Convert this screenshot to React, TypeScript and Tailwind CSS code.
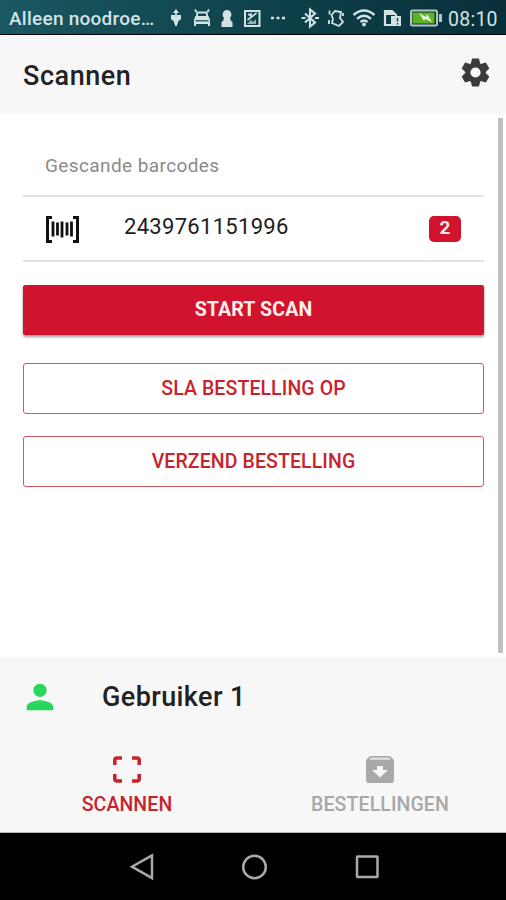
import type { ReactNode } from "react";

function StatusBar() {
  return (
    <header className="flex h-[35px] shrink-0 items-center border-b border-black bg-linear-to-r from-[#1a5860] via-[#0f434c] to-[#082f3a] text-[#d3e2e5]">
      <span className="ml-[9px] w-[150px] whitespace-nowrap pt-[4px] text-[19px] font-medium leading-[36px] tracking-[0.25px]">Alleen noodroe…</span>
      <svg className="h-[34px] w-[284px] shrink-0" viewBox="159 0 284 34" fill="none" stroke="currentColor" strokeWidth="2">
        <path d="M176 11v15" strokeWidth="1.800" />
        <path d="M176 9l-3 4h6zM171 15h4v2h2v-2h4v4l-3 2.500V23l-2 3-2-3v-1.500L171 19z" fill="currentColor" stroke="none" />
        <path d="M197 16.500v-2.500q0-1.500 1.500-1.500h7q1.500 0 1.500 1.500v2.500M196.500 12l-1.500-2.500M207.500 12l1.500-2.500" strokeWidth="1.900" />
        <path d="M195.500 16h13l1.500 3.500V26h-2v-2h-12v2h-2v-6.500z" fill="currentColor" stroke="none" />
        <path d="M195.500 20.800h13" stroke="#104750" strokeWidth="1.200" />
        <path d="M227 10a4.500 4.500 0 0 1 3 7.800L231 21l1.500 1v5h-11v-5l1.500-1 1-3.200A4.500 4.500 0 0 1 227 10z" fill="currentColor" stroke="none" />
        <path d="M245 11h14.500v15H245z" />
        <path d="M247.500 20l9-7M248 14l3 2v-3" strokeWidth="1.600" />
        <path d="M247 24l4-4 2 2 3-3v5z" fill="currentColor" stroke="none" opacity="0.700" />
        <path d="M271 18h3M276.500 18h3M282 18h3" strokeWidth="2.500" />
        <path d="M305 13.500l10 9-5 4V9.500l5 4-10 9M301.500 18h4M315 18h4" strokeWidth="2.100" />
        <path d="M331.500 15l3.500-4 6 1-1 6 3 4-4 4-7-3 1-4zM329.500 10.500v4M343 13v3M329 20v4" strokeWidth="1.800" />
        <path d="M353.500 15q10.500-9 21 0M357 18.800q7-6 14 0M360.500 22q3.500-3 7 0" strokeWidth="2.400" />
        <circle cx="364" cy="24.500" r="1.900" fill="currentColor" stroke="none" />
        <path d="M391 25h-6V11h7l4 4v1" strokeWidth="2.200" />
        <path d="M385 11h7l4 4h-11z" fill="currentColor" stroke="none" />
        <path d="M391 16h10v10h-10z" fill="currentColor" stroke="none" />
        <path d="M397.500 18v3.500M397.500 23v1.500" stroke="#0b3540" strokeWidth="1.400" />
        <rect x="411" y="10.500" width="26" height="15" rx="1.500" fill="#0b3540" stroke="#b7c4c5" />
        <path d="M412.500 12.500h22v11h-22z" fill="#5eb321" stroke="none" />
        <path d="M419 13l7 4 1-3 5 8-7-3-1 2z" fill="#e9f4df" stroke="none" />
        <path d="M440.500 14v8" stroke="#b7c4c5" strokeWidth="3" />
      </svg>
      <span className="ml-[5px] whitespace-nowrap pt-[5px] text-[19.5px] leading-[37px] tracking-[0.25px]">08:10</span>
    </header>
  );
}

function OutlineButton({ children }: { children: ReactNode }) {
  return (
    <button className="flex h-[51px] w-full items-center justify-center rounded-[3px] border border-[#d4565f] pt-px text-[19.5px] font-medium tracking-[0.1px] text-[#c9222b]">
      {children}
    </button>
  );
}

function Content() {
  return (
    <main className="flex h-[543px] shrink-0 bg-white pr-[3px]">
      <div className="flex-1 pl-[23px] pr-[14px] pt-[22px]">
        <h2 className="flex h-[61px] items-center border-b-2 border-[#e2e2e2] pl-[22px] pt-[2px] text-[19px] text-[#8a8a8a]">
          <span className="tracking-[0.4px]">Gescande barcodes</span>
        </h2>
        <div className="flex h-[65px] items-center border-b-2 border-[#e2e2e2] pl-[23px] pr-[23px]">
          <svg className="mt-[2px] h-[27px] w-[33px]" viewBox="0 0 33 27" fill="none" stroke="#111">
            <path d="M6 1.500H1.500v24H6M27 1.500h4.500v24H27" strokeWidth="3" />
            <path d="M7 5.500v15M11.500 6.500v13M16 5.500v16M21 6.500v13M25.500 5.500v15" strokeWidth="2.800" />
          </svg>
          <span className="ml-[45px] flex-1 pb-[3px] text-[22px] leading-[28px] tracking-[0.3px] text-[#1d1d1d]">2439761151996</span>
          <span className="flex h-[26px] w-[32px] items-center justify-center rounded-[5px] bg-[#d1132e] pb-px text-[19px] font-bold text-[#fbe8e9]">2</span>
        </div>
        <div className="flex flex-col pt-[23px]">
          <button className="mb-[28px] flex h-[50px] w-full items-center justify-center rounded-[2px] bg-[#d1132e] text-[19.5px] font-bold tracking-[0.15px] text-[#fff0ee] shadow-[0_2px_3px_rgba(0,0,0,0.4)]">
            START SCAN
          </button>
          <OutlineButton>SLA BESTELLING OP</OutlineButton>
          <div className="h-[22px]" />
          <OutlineButton>VERZEND BESTELLING</OutlineButton>
        </div>
      </div>
      <div className="mt-[4px] h-[535px] w-[5px] bg-[#c1c1c1]" />
    </main>
  );
}

function BottomTabs() {
  return (
    <nav className="flex h-[97px] shrink-0 border-b border-[#b5b5b5] text-[19.5px] font-medium tracking-[0.1px]">
      <div className="flex flex-1 flex-col items-center pl-px pt-[20px] text-[#c9222b]">
        <svg className="h-[27px] w-[28px]" viewBox="0 0 28 27" fill="none" stroke="currentColor" strokeWidth="3.500">
          <path d="M1.800 9V4Q1.800 2 4 2h5M19 2h5q2.200 0 2.200 2v5M26.200 18v5q0 2-2.200 2h-5M9 25H4q-2.200 0-2.200-2v-5" />
        </svg>
        <span className="mt-[8px] leading-[28px]">SCANNEN</span>
      </div>
      <div className="flex flex-1 flex-col items-center pl-px pt-[20px] text-[#a8a8a8]">
        <svg className="h-[27px] w-[28px]" viewBox="0 0 28 27">
          <path d="M4 0h20l4 4v20q0 3-3 3H3q-3 0-3-3V4z" fill="currentColor" />
          <path d="M5 1.500h18l2 2.300H3z" fill="#e2e2e2" />
          <path d="M11 10h6v4h5l-8 7.500L6 14h5z" fill="#f7f7f7" />
        </svg>
        <span className="mt-[8px] leading-[28px]">BESTELLINGEN</span>
      </div>
    </nav>
  );
}

function AndroidNav() {
  return (
    <footer className="flex h-[67px] shrink-0 items-center bg-black pl-[129px] pt-[1px]">
      <svg className="h-[28px] w-[252px]" viewBox="129 0 252 28" fill="none" stroke="#a9a9a9" strokeWidth="2.500">
        <path d="M152 2.500v22.500l-20-11.300z" />
        <circle cx="254.500" cy="14" r="11.300" />
        <rect x="357" y="3.500" width="20.500" height="20.500" rx="0.500" />
      </svg>
    </footer>
  );
}

export default function App() {
  return (
    <div className="flex h-[900px] w-[506px] flex-col overflow-hidden bg-[#f7f7f7] font-[Roboto,sans-serif]">
      <StatusBar />
      <div className="flex h-[79px] shrink-0 items-center justify-between pl-[23px] pr-[16px]">
        <h1 className="pt-[3px] text-[27px] font-medium tracking-[0.55px] text-[#222]">Scannen</h1>
        <svg className="mb-[4px] h-[29px] w-[29px]" viewBox="-14.5 -14.5 29 29" fill="none" stroke="#3b3b3b">
          <circle r="7.600" strokeWidth="5" />
          <g fill="#3b3b3b" stroke="none">
            <path id="tooth" d="M-5 -8L-3.400 -14H3.400L5 -8z" />
            <path d="M-5 -8L-3.400 -14H3.400L5 -8z" transform="rotate(60)" />
            <path d="M-5 -8L-3.400 -14H3.400L5 -8z" transform="rotate(120)" />
            <path d="M-5 -8L-3.400 -14H3.400L5 -8z" transform="rotate(180)" />
            <path d="M-5 -8L-3.400 -14H3.400L5 -8z" transform="rotate(240)" />
            <path d="M-5 -8L-3.400 -14H3.400L5 -8z" transform="rotate(300)" />
          </g>
        </svg>
      </div>
      <Content />
      <div className="flex h-[79px] shrink-0 items-center pl-[20px]">
        <svg className="h-[40px] w-[40px]" viewBox="0 0 24 24" fill="#2bd65f">
          <path d="M12 12c2.210 0 4-1.790 4-4s-1.790-4-4-4-4 1.790-4 4 1.790 4 4 4zm0 2c-2.670 0-8 1.340-8 4v2h16v-2c0-2.660-5.330-4-8-4z" />
        </svg>
        <span className="ml-[42px] pt-[2px] text-[27px] font-medium tracking-[0.4px] text-[#222]">Gebruiker 1</span>
      </div>
      <BottomTabs />
      <AndroidNav />
    </div>
  );
}
